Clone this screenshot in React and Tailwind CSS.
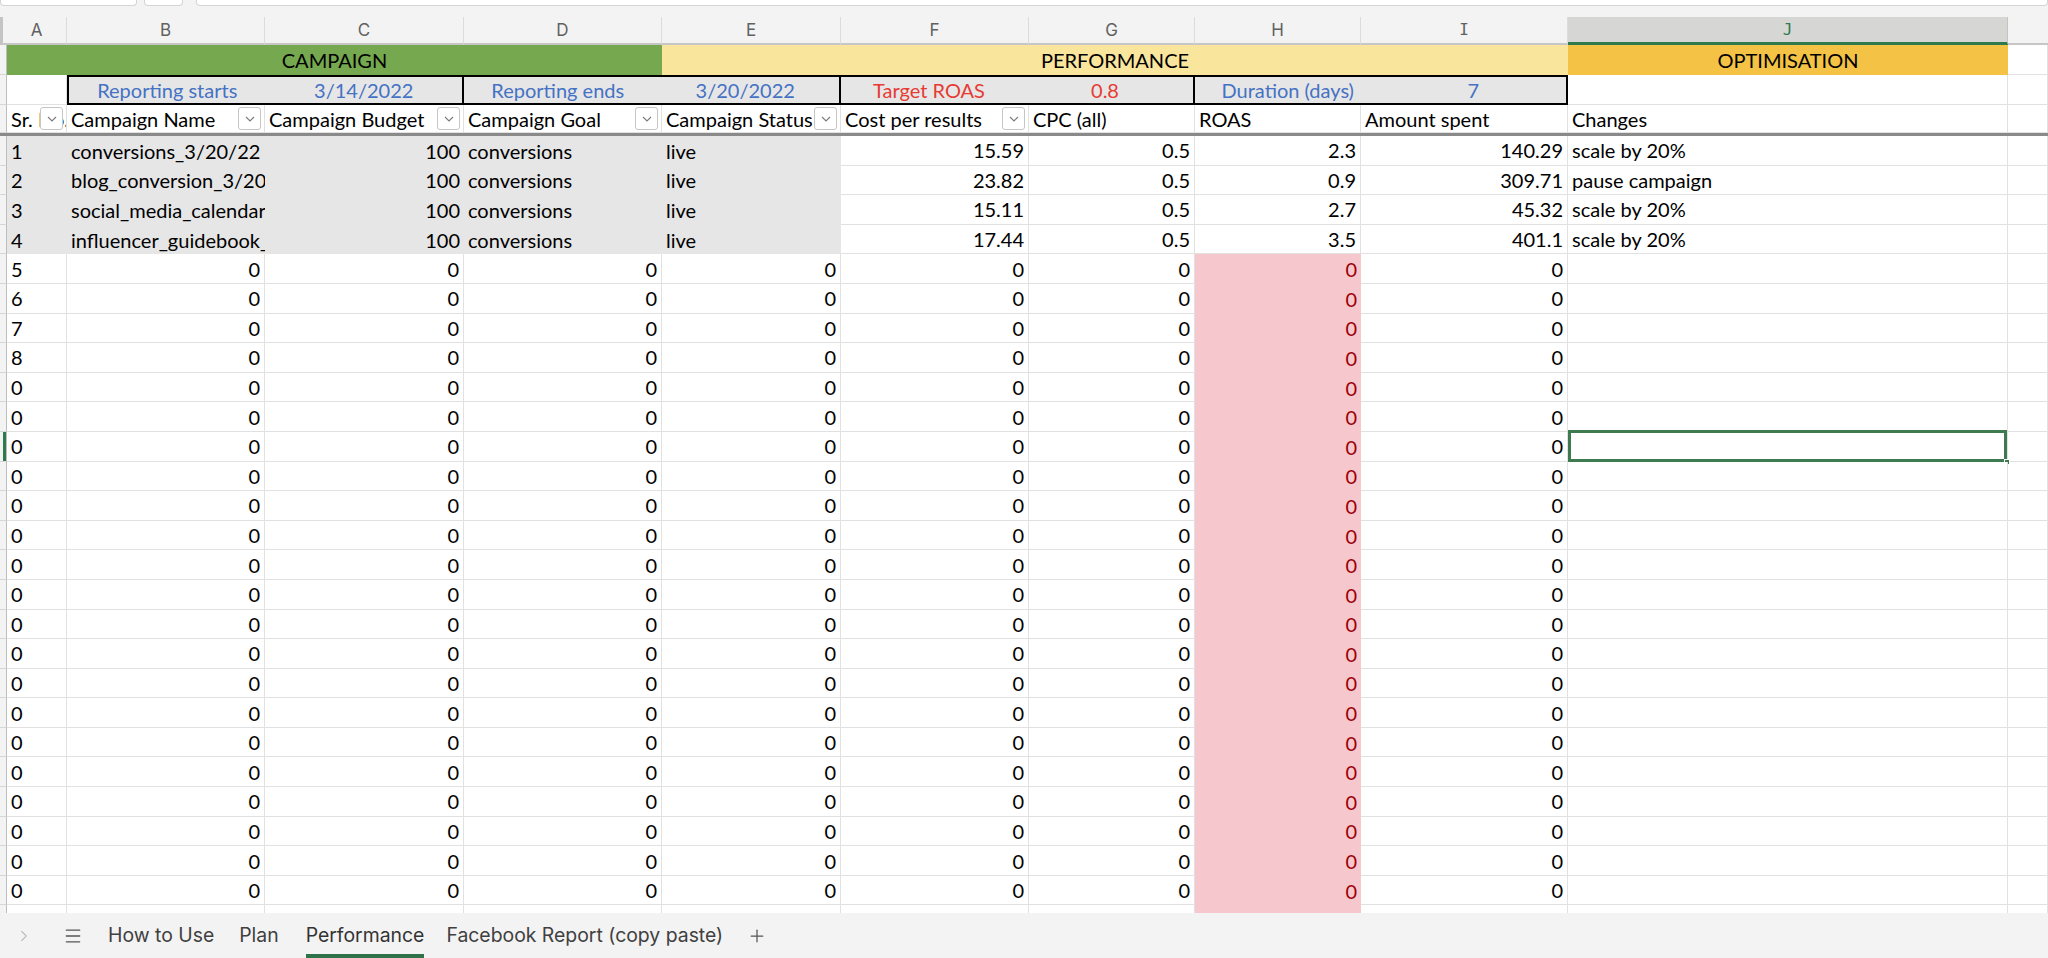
import React from "react";
import { ChevronRight, Menu, Plus } from "lucide-react";

const GRID = "grid grid-cols-[7px_60px_198px_199px_198px_179px_188px_166px_166px_207px_440px_1fr]";

const campaigns = [
  { no: "1", name: "conversions_3/20/22", cost: "15.59", roas: "2.3", spent: "140.29", change: "scale by 20%" },
  { no: "2", name: "blog_conversion_3/20/22", cost: "23.82", roas: "0.9", spent: "309.71", change: "pause campaign" },
  { no: "3", name: "social_media_calendar_3/20/22", cost: "15.11", roas: "2.7", spent: "45.32", change: "scale by 20%" },
  { no: "4", name: "influencer_guidebook_3/20/22", cost: "17.44", roas: "3.5", spent: "401.1", change: "scale by 20%" },
];

// labels in column A for the zero rows below the campaigns
const emptyRows = ["5", "6", "7", "8", ...Array(18).fill("0")];
const SELECTED = 6;

const letters = ["A", "B", "C", "D", "E", "F", "G", "H"];

function Gutter({ active }) {
  return (
    <div className="flex justify-end border-r border-b border-r-[#bdbdbd] border-b-[#d6d6d6] bg-[#f3f3f3]">
      {active && <div className="w-[3px] bg-[#2f7a4c]" />}
    </div>
  );
}

function FilterBtn() {
  return (
    <span className="absolute right-[3px] top-[2px] flex h-[23px] w-[23px] items-center justify-center rounded-[3px] border border-[#c6c6c6] bg-white">
      <svg width="10" height="6" viewBox="0 0 10 6">
        <path d="M1 1l4 4 4-4" fill="none" stroke="#7a7a7a" strokeWidth="1.1" />
      </svg>
    </span>
  );
}

function HeadCell({ label, filter }) {
  return (
    <div className="relative flex items-center overflow-hidden whitespace-nowrap border-r border-b border-[#e1e1e1] bg-white px-[4px]">
      {label}
      {filter && <FilterBtn />}
    </div>
  );
}

const white = "flex items-center overflow-hidden whitespace-nowrap border-r border-b border-[#e1e1e1] bg-white px-[4px]";
const whiteR = "flex items-center justify-end overflow-hidden whitespace-nowrap border-r border-b border-[#e1e1e1] bg-white px-[4px]";
const gray = "flex items-center overflow-hidden whitespace-nowrap bg-[#e6e6e6] px-[4px]";
const grayR = "flex items-center justify-end overflow-hidden whitespace-nowrap bg-[#e6e6e6] px-[4px]";
const pink = "flex items-center justify-end overflow-hidden whitespace-nowrap bg-[#f6c8ce] px-[4px] text-[#9c0006]";

function InfoBox({ left, right, color, first }) {
  return (
    <div
      className={
        first
          ? "col-span-2 grid grid-cols-2 border-2 border-black bg-[#e7e6e6]"
          : "col-span-2 grid grid-cols-2 border-y-2 border-r-2 border-black bg-[#e7e6e6]"
      }
    >
      <div className={"flex items-center justify-center " + color}>{left}</div>
      <div className={"flex items-center justify-center " + color}>{right}</div>
    </div>
  );
}

export default function App() {
  return (
    <div className="flex h-[958px] w-[2048px] flex-col overflow-hidden bg-[#f3f3f3] font-[Lato,'Liberation_Sans',sans-serif] text-[20px] leading-none text-black">
      {/* formula bar remnants */}
      <div className="flex h-[17px] gap-[7px]">
        <div className="h-[6px] w-[137px] rounded-b-[4px] border-x border-b border-[#d4d4d4] bg-white" />
        <div className="h-[6px] w-[39px] rounded-b-[4px] border-x border-b border-[#d4d4d4] bg-white" />
        <div className="ml-[6px] h-[6px] flex-1 rounded-b-[4px] border-x border-b border-[#d4d4d4] bg-white" />
      </div>

      {/* column letters */}
      <div className={GRID + " h-[28px] font-[Inter,sans-serif] text-[17px] text-[#616161]"}>
        <div className="border-l-[3px] border-b-2 border-l-[#c4c4c4] border-b-[#c6c6c6] bg-[#f3f3f3]" />
        {letters.map((l) => (
          <div key={l} className="flex items-center justify-center border-r border-b-2 border-r-[#dcdcdc] border-b-[#c6c6c6] bg-[#f3f3f3]">
            {l}
          </div>
        ))}
        <div className="flex items-center justify-center border-r border-b-2 border-r-[#dcdcdc] border-b-[#c6c6c6] bg-[#f3f3f3] font-['DejaVu_Sans_Mono',monospace] text-[16px]">
          I
        </div>
        <div className="flex items-center justify-center border-r border-b-[3px] border-r-[#c4c4c4] border-b-[#2f7a4c] bg-[#d6d6d5] font-['DejaVu_Sans_Mono',monospace] text-[16px] text-[#2f7a4c]">
          J
        </div>
        <div className="border-b-2 border-[#c6c6c6] bg-[#f3f3f3]" />
      </div>

      {/* section bands */}
      <div className={GRID + " h-[30px] bg-white"}>
        <Gutter />
        <div className="col-span-4 flex items-center justify-center bg-[#76a94f]">CAMPAIGN</div>
        <div className="col-span-5 flex items-center justify-center bg-[#fae59d]">PERFORMANCE</div>
        <div className="flex items-center justify-center bg-[#f4c244]">OPTIMISATION</div>
        <div className={white} />
      </div>

      {/* reporting info */}
      <div className={GRID + " h-[30px] bg-white"}>
        <Gutter />
        <div className={white} />
        <InfoBox first left="Reporting starts" right="3/14/2022" color="text-[#4472c4]" />
        <InfoBox left="Reporting ends" right="3/20/2022" color="text-[#4472c4]" />
        <InfoBox left="Target ROAS" right="0.8" color="text-[#e53b33]" />
        <InfoBox left="Duration (days)" right="7" color="text-[#4472c4]" />
        <div className={white} />
        <div className={white} />
      </div>

      {/* table headers */}
      <div className={GRID + " h-[28px] bg-white"}>
        <Gutter />
        <HeadCell label="Sr. No." filter />
        <HeadCell label="Campaign Name" filter />
        <HeadCell label="Campaign Budget" filter />
        <HeadCell label="Campaign Goal" filter />
        <HeadCell label="Campaign Status" filter />
        <HeadCell label="Cost per results" filter />
        <HeadCell label="CPC (all)" />
        <HeadCell label="ROAS" />
        <HeadCell label="Amount spent" />
        <HeadCell label="Changes" />
        <HeadCell label="" />
      </div>
      <div className="h-[3px] bg-[#8a8a8a]" />

      {/* body */}
      <div className="flex-1 overflow-hidden bg-white">
        {campaigns.map((c) => (
          <div key={c.no} className={GRID + " h-[29.6px]"}>
            <Gutter />
            <div className={gray}>{c.no}</div>
            <div className={gray}>{c.name}</div>
            <div className={grayR}>100</div>
            <div className={gray}>conversions</div>
            <div className={gray}>live</div>
            <div className={whiteR}>{c.cost}</div>
            <div className={whiteR}>0.5</div>
            <div className={whiteR}>{c.roas}</div>
            <div className={whiteR}>{c.spent}</div>
            <div className={white}>{c.change}</div>
            <div className={white} />
          </div>
        ))}
        {[...emptyRows, ""].map((label, i) => (
          <div key={i} className={GRID + " h-[29.6px]"}>
            <Gutter active={i === SELECTED} />
            <div className={white}>{label}</div>
            {[0, 1, 2, 3, 4, 5].map((n) => (
              <div key={n} className={whiteR}>{label !== "" && "0"}</div>
            ))}
            <div className={pink}>{label !== "" && "0"}</div>
            <div className={whiteR}>{label !== "" && "0"}</div>
            <div className={white + " relative overflow-visible"}>
              {i === SELECTED && (
                <>
                  <div className="absolute -top-[2px] left-0 right-0 -bottom-[1px] border-[3px] border-[#3d7a50]" />
                  <div className="absolute -right-[3px] -bottom-[4px] h-[6px] w-[6px] border border-white bg-[#3d7a50]" />
                </>
              )}
            </div>
            <div className={white} />
          </div>
        ))}
      </div>

      {/* sheet tabs */}
      <div className="flex h-[45px] items-stretch bg-[#f3f3f3] font-[Inter,sans-serif] text-[19.4px] text-[#404040]">
        <div className="ml-[15px] flex items-center">
          <ChevronRight className="h-[18px] w-[18px] text-[#bdbdbd]" strokeWidth={1.5} />
        </div>
        <div className="ml-[30px] flex items-center">
          <Menu className="h-[20px] w-[20px] text-[#555]" strokeWidth={1.6} />
        </div>
        <div className="ml-[25px] flex items-center">How to Use</div>
        <div className="ml-[25px] flex items-center">Plan</div>
        <div className="ml-[27px] flex items-center border-b-[4px] border-[#2f7148] pt-[4px] text-[#333]">Performance</div>
        <div className="ml-[22px] flex items-center">Facebook Report (copy paste)</div>
        <div className="ml-[24px] flex items-center">
          <Plus className="h-[20px] w-[20px] text-[#555]" strokeWidth={1.5} />
        </div>
      </div>
    </div>
  );
}
